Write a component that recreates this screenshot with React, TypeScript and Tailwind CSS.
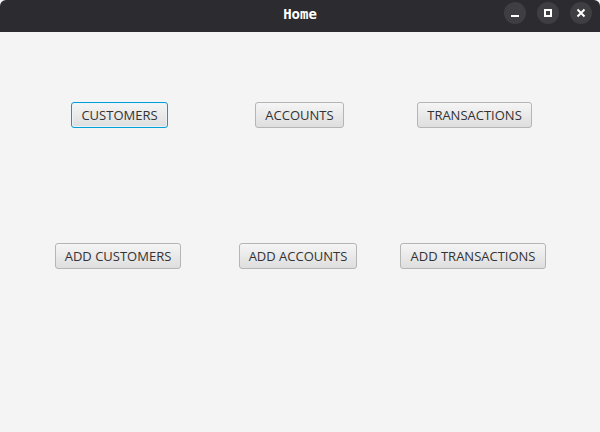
const rows = [
  ["CUSTOMERS", "ACCOUNTS", "TRANSACTIONS"],
  ["ADD CUSTOMERS", "ADD ACCOUNTS", "ADD TRANSACTIONS"],
];

function FxButton({ label, focused }: { label: string; focused?: boolean }) {
  return (
    <button
      className={
        "h-[26px] rounded-[3px] border bg-gradient-to-b from-[#f5f5f5] to-[#dedede] px-[9px] text-[13px] leading-none text-[#333] " +
        (focused
          ? "border-[#039ed3] shadow-[inset_0_0_0_1px_#e8f4fa]"
          : "border-[#b5b5b5]")
      }
      style={{ fontFamily: '"Open Sans", sans-serif' }}
    >
      {label}
    </button>
  );
}

export default function App() {
  return (
    <div className="flex h-[432px] w-[600px] flex-col bg-[#f4f4f4]">
      <div className="relative flex h-[32px] shrink-0 items-center justify-center rounded-t-[6px] bg-[#2c2b30] pb-[3px]">
        <span
          className="text-[14px] font-bold text-white"
          style={{ fontFamily: '"DejaVu Sans Mono", monospace' }}
        >
          Home
        </span>
        <div className="absolute right-[8px] top-[2px] flex gap-[11px]">
          <div className="flex h-[22px] w-[22px] items-center justify-center rounded-full bg-[#3f3e43]">
            <div className="mt-[5px] h-[2px] w-[8px] bg-white" />
          </div>
          <div className="flex h-[22px] w-[22px] items-center justify-center rounded-full bg-[#3f3e43]">
            <div className="h-[8px] w-[8px] border-2 border-white" />
          </div>
          <div className="flex h-[22px] w-[22px] items-center justify-center rounded-full bg-[#3f3e43]">
            <svg width="10" height="10" viewBox="0 0 10 10">
              <path d="M1.5 1.5 L8.5 8.5 M8.5 1.5 L1.5 8.5" stroke="white" strokeWidth="2" />
            </svg>
          </div>
        </div>
      </div>
      <div className="grid grid-cols-[180px_180px_170px] gap-y-[115px] pl-[28px] pt-[70px]">
        {rows.flat().map((label, i) => (
          <div key={label} className={i < 3 ? "flex justify-center pl-[3px]" : "flex justify-center"}>
            <FxButton label={label} focused={i === 0} />
          </div>
        ))}
      </div>
    </div>
  );
}
